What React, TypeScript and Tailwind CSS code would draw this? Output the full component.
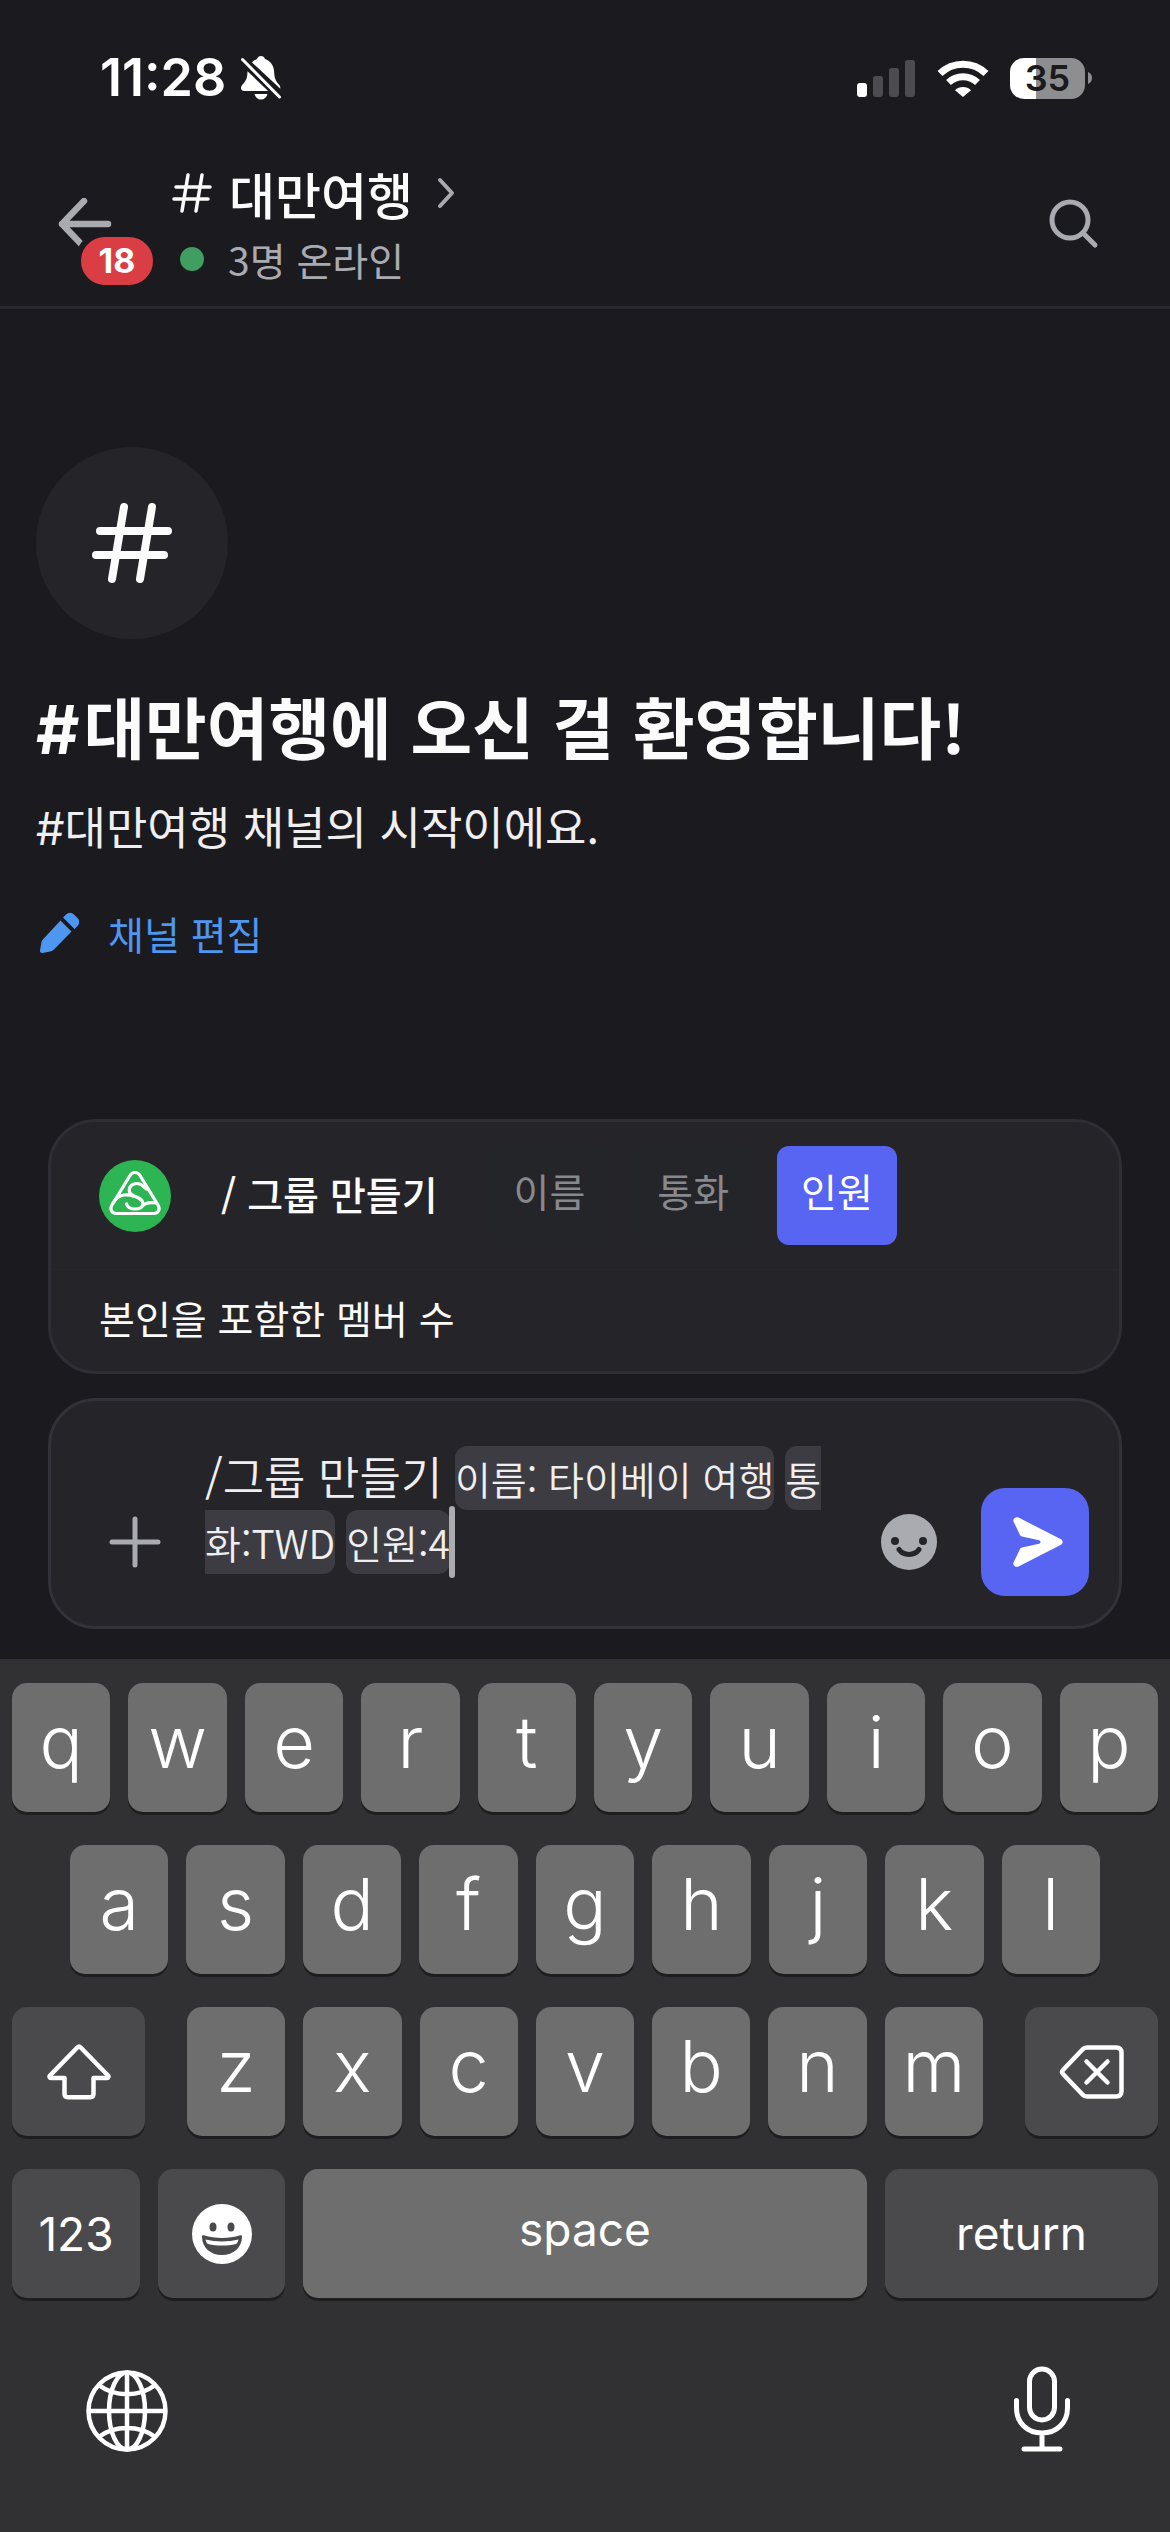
import type { ReactNode } from "react";

type Param = { name: string; active?: boolean };

const PARAMS: Param[] = [{ name: "이름" }, { name: "통화" }, { name: "인원", active: true }];

const ROW_1 = ["q", "w", "e", "r", "t", "y", "u", "i", "o", "p"];
const ROW_2 = ["a", "s", "d", "f", "g", "h", "j", "k", "l"];
const ROW_3 = ["z", "x", "c", "v", "b", "n", "m"];

function HashIcon({ className, stroke }: { className: string; stroke: number }) {
  return (
    <svg
      viewBox="0 0 80 80"
      className={className}
      fill="none"
      stroke="currentColor"
      strokeWidth={stroke}
      strokeLinecap="round"
      aria-hidden="true"
    >
      <path d="M32 4 20 76M60 4 48 76M8 28h68M4 52h68" />
    </svg>
  );
}

function StatusBar() {
  return (
    <div className="flex h-[141px] items-start justify-between pt-[48px] pr-[78px] pl-[100px] font-['Inter',sans-serif] text-white">
      <div className="flex items-center gap-[14px]">
        <span className="text-[52px] leading-[60px] font-semibold">11:28</span>
        <svg viewBox="0 0 42 44" className="h-[44px] w-[42px]" fill="currentColor" aria-hidden="true">
          <path d="M12 6.500C14 4.500 15.500 3.500 17 2.900 17.500 1 19.200 0 21 0s3.500 1 4 2.900c5 1.600 8.600 6 9 11.600.4 7.500 1.500 10 4.500 13.500 1.500 1.800 2 3 1.800 4.800L12 6.500Z" />
          <path d="M7.500 15.200 28.200 35H4.500C2.200 35 1 33.700 1 32c0-2 1.300-3 2.500-4.500 3-3.500 3.800-6 4-12.300ZM14.500 38h13c-.8 3.500-3.400 5.500-6.500 5.500s-5.700-2-6.500-5.500Z" />
          <path d="M2.500 3.500 39.500 41" stroke="currentColor" strokeWidth="3" strokeLinecap="round" />
        </svg>
      </div>
      <div className="flex h-[60px] items-center">
        <svg viewBox="0 0 58 37" className="mr-[22px] h-[37px] w-[58px]" fill="currentColor" aria-hidden="true">
          <rect x="0" y="23" width="10" height="14" rx="3" />
          <g opacity="0.22">
            <rect x="16" y="16" width="10" height="21" rx="3" />
            <rect x="32" y="8" width="10" height="29" rx="3" />
            <rect x="48" y="0" width="10" height="37" rx="3" />
          </g>
        </svg>
        <svg viewBox="0 0 52 37" className="mr-[21px] h-[37px] w-[52px]" fill="none" stroke="currentColor" aria-hidden="true">
          <path d="M3 13.500A33 33 0 0 1 49 13.500" strokeWidth="7" />
          <path d="M11.500 22.500A21 21 0 0 1 40.500 22.500" strokeWidth="7" />
          <path d="M18 30.200a11.500 11.500 0 0 1 16 0L26 37Z" fill="currentColor" stroke="none" />
        </svg>
        <div className="flex h-[41px] w-[75px] items-center justify-center rounded-[14px] bg-linear-to-r from-white from-35% to-[#8e8e90] to-35% text-[36px] leading-none font-semibold text-[#1b1a1f]">
          35
        </div>
        <svg viewBox="0 0 4 12" className="ml-[3px] h-[12px] w-[4px]" fill="#8e8e90" aria-hidden="true">
          <path d="M0 0c2.500 1 4 3.300 4 6s-1.500 5-4 6Z" />
        </svg>
      </div>
    </div>
  );
}

function ChannelHeader() {
  return (
    <header className="flex h-[168px] items-center border-b-3 border-[#29282e] pr-[71px] pl-[57px]">
      <button type="button" aria-label="뒤로" className="relative h-[52px] w-[56px] text-[#aaaab1]">
        <svg viewBox="0 0 56 52" className="h-full w-full" fill="none" stroke="currentColor" strokeWidth="6.500" strokeLinecap="round" strokeLinejoin="round" aria-hidden="true">
          <path d="M51 26H5M27 3 5 26l22 23" />
        </svg>
        <span className="absolute top-[33px] left-[18px] flex h-[60px] w-[84px] items-center justify-center rounded-full border-6 border-[#1b1a1f] bg-[#da3e44] font-['Inter',sans-serif] text-[34px] leading-none font-bold text-white">
          18
        </span>
      </button>
      <a href="#channel" className="ml-[59px] flex flex-col pb-[2px]">
        <span className="flex items-center">
          <HashIcon className="size-[40px] text-[#fbfbfb]" stroke={7} />
          <span className="ml-[17px] text-[50px] leading-[72px] font-medium text-[#fbfbfb]">대만여행</span>
          <svg viewBox="0 0 18 32" className="ml-[24px] h-[32px] w-[18px]" fill="none" stroke="#aaaab1" strokeWidth="4" strokeLinecap="round" strokeLinejoin="round" aria-hidden="true">
            <path d="M3 3 15 16 3 29" />
          </svg>
        </span>
        <span className="flex items-center">
          <span className="ml-[8px] size-[24px] rounded-full bg-[#409e60]" />
          <span className="ml-[24px] text-[39px] leading-[60px] text-[#aaaab1]">3명 온라인</span>
        </span>
      </a>
      <button type="button" aria-label="검색" className="ml-auto text-[#aaaab1]">
        <svg viewBox="0 0 50 50" className="size-[50px]" fill="none" stroke="currentColor" strokeWidth="5" strokeLinecap="round" aria-hidden="true">
          <circle cx="21" cy="21" r="18" />
          <path d="m35 35 11 11" />
        </svg>
      </button>
    </header>
  );
}

function Welcome() {
  return (
    <section className="flex flex-1 flex-col items-start px-9 pt-[138px]">
      <div className="flex size-[192px] items-center justify-center rounded-full bg-[#252429]">
        <HashIcon className="size-[80px] text-[#fbfbfb]" stroke={8} />
      </div>
      <h1 className="mt-[38px] text-[67px] leading-[96px] font-bold text-[#fbfbfb]">
        <span className="mr-1 font-['Inter',sans-serif]">#</span>대만여행에 오신 걸 환영합니다!
      </h1>
      <p className="mt-[15px] text-[45px] leading-[66px] text-[#efeff1]">
        <span className="font-['Inter',sans-serif]">#</span>대만여행 채널의 시작이에요.
      </p>
      <a href="#edit" className="mt-[41px] flex items-center gap-6 text-[39px] leading-[60px] text-[#4e96ef]">
        <svg viewBox="0 0 48 48" className="size-[48px]" fill="currentColor" aria-hidden="true">
          <path d="M29 6.500a5.500 5.500 0 0 1 8 0l3.500 3.500a5.500 5.500 0 0 1 0 8l-3 3L26 9.500Z" transform="translate(1 -1)" />
          <path d="m24.500 11.500 11 11L18 40.500c-1.200 1.200-2.300 1.700-4 2L6.500 44c-1.600.2-2.700-.8-2.500-2.500L5.300 34c.3-1.700.8-2.800 2-4Z" />
        </svg>
        채널 편집
      </a>
    </section>
  );
}

function BotLogo() {
  return (
    <svg viewBox="0 0 72 72" className="size-[72px]" fill="none" stroke="#fff" strokeWidth="3.200" strokeLinejoin="round" strokeLinecap="round" aria-hidden="true">
      <circle cx="36" cy="36" r="36" fill="#2db553" stroke="none" />
      <path d="M31 15.500c2.200-4 7.800-4 10 0L59 45c2.800 4.600 0 8.500-4.500 8.500h-37c-4.500 0-7.300-3.900-4.500-8.500Z" />
      <path d="M49 29c-3 2-4-5.500-11-5.500-5.500 0-8.500 4-7.500 8.500 1.500 5 13.500 5 13.500 11.500 0 4-4 5.500-8 5.500-4.500 0-7.500-2-8.500-5" />
      <path d="M14 43c3-5 6.500-7.500 11-8 4-.3 7 0 9 1M43 46.500c2.500-3 8-4.500 14-3.500" />
    </svg>
  );
}

function CommandCard() {
  return (
    <section className="rounded-[48px] border-3 border-[#2f2e34] bg-[#252429]">
      <div className="flex h-[147px] items-center px-12">
        <BotLogo />
        <h2 className="ml-[50px] pb-[5px] text-[39px] leading-[60px] font-medium text-[#fbfbfb]">/ 그룹 만들기</h2>
        <ul className="ml-[52px] flex gap-6">
          {PARAMS.map((p) => (
            <li
              key={p.name}
              className={
                p.active
                  ? "rounded-xl bg-[#5865f2] px-6 pt-[14px] pb-[25px] text-[39px] leading-[60px] text-white"
                  : "rounded-xl bg-[#242529] px-6 pt-[14px] pb-[25px] text-[39px] leading-[60px] text-[#88888d]"
              }
            >
              {p.name}
            </li>
          ))}
        </ul>
      </div>
      <p className="border-t border-[#28272c] px-12 pt-[17px] pb-[24px] text-[39px] leading-[60px] text-[#fbfbfb]">
        본인을 포함한 멤버 수
      </p>
    </section>
  );
}

function Composer() {
  return (
    <form className="flex items-end rounded-[48px] border-3 border-[#333238] bg-[#252429] pt-[43px] pr-[30px] pb-[30px] pl-[57px]">
      <button type="button" aria-label="첨부" className="mb-[27px] text-[#aaaab1]">
        <svg viewBox="0 0 54 54" className="size-[54px]" fill="none" stroke="currentColor" strokeWidth="5" strokeLinecap="round" aria-hidden="true">
          <path d="M27 4v46M4 27h46" />
        </svg>
      </button>
      <div
        role="textbox"
        aria-label="메시지"
        contentEditable
        suppressContentEditableWarning
        spellCheck={false}
        className="mr-[30px] mb-[22px] ml-[43px] flex-1 text-[39px] leading-[64px] font-[350] text-[#efeff1] outline-none"
      >
        <span className="text-[45px]">/그룹 만들기 </span>
        <span className="rounded-xl bg-[#3d3c42] py-[4px]">이름: 타이베이 여행</span>{" "}
        <span className="rounded-xl bg-[#3d3c42] py-[4px]">통화:TWD</span>{" "}
        <span className="relative rounded-xl bg-[#3d3c42] py-[4px]">
          인원:4
          <span className="absolute top-[-4px] right-[-5px] h-[72px] w-[6px] rounded-full bg-[#ababb0]" />
        </span>
      </div>
      <button type="button" aria-label="이모티콘" className="mb-[26px]">
        <svg viewBox="0 0 56 56" className="size-[56px]" aria-hidden="true">
          <circle cx="28" cy="28" r="28" fill="#aaaab1" />
          <circle cx="14" cy="27" r="4" fill="#252429" />
          <circle cx="42" cy="27" r="4" fill="#252429" />
          <path d="M18 35.500c4.500 6.500 15.500 6.500 20 0" fill="none" stroke="#252429" strokeWidth="5" strokeLinecap="round" />
        </svg>
      </button>
      <button
        type="submit"
        aria-label="보내기"
        className="ml-[44px] flex size-[108px] items-center justify-center rounded-3xl bg-[#5865f2] text-white"
      >
        <svg viewBox="0 0 52 52" className="ml-[6px] size-[52px]" fill="currentColor" aria-hidden="true">
          <path d="M6.500 1.500 49 23.300c2.200 1.200 2.200 4.200 0 5.400L6.500 50.500C3.800 51.800.4 49.500 1.500 46.500L8 33c.4-.9 1-1.300 2-1.500l17-3.700c2-.5 2-3.100 0-3.600l-17-3.700c-1-.2-1.600-.6-2-1.500L1.500 5.500C.4 2.500 3.800.2 6.500 1.500Z" />
        </svg>
      </button>
    </form>
  );
}

function LetterKey({ letter }: { letter: string }) {
  return (
    <button
      type="button"
      className="h-[129px] min-w-0 flex-1 rounded-[15px] bg-[#6e6e6f] pb-[12px] text-[72px] leading-none font-light text-white shadow-[0_3px_0_#1e1e1e]"
    >
      {letter}
    </button>
  );
}

function DarkKey({ label, className, children }: { label: string; className: string; children: ReactNode }) {
  return (
    <button
      type="button"
      aria-label={label}
      className={`flex h-[129px] items-center justify-center rounded-[15px] bg-[#4a4a4c] text-[46px] leading-none text-white shadow-[0_3px_0_#1e1e1e] ${className}`}
    >
      {children}
    </button>
  );
}

function Keyboard() {
  return (
    <section aria-label="키보드" className="bg-[#313133] px-3 pt-6 pb-[80px] font-['Inter',sans-serif]">
      <div className="flex flex-col gap-[33px]">
        <div className="flex gap-[18px]">
          {ROW_1.map((l) => (
            <LetterKey key={l} letter={l} />
          ))}
        </div>
        <div className="flex gap-[18px] px-[58px]">
          {ROW_2.map((l) => (
            <LetterKey key={l} letter={l} />
          ))}
        </div>
        <div className="flex">
          <DarkKey label="shift" className="w-[133px]">
            <svg viewBox="0 0 64 56" className="h-[56px] w-[64px]" fill="none" stroke="currentColor" strokeWidth="4.500" strokeLinejoin="round" aria-hidden="true">
              <path d="M30.300 3.500c1-1 2.400-1 3.400 0L61 31.500c1 1.200.4 2.500-1 2.500H46.500v16c0 2.200-1 3.200-3.200 3.200H20.700c-2.200 0-3.200-1-3.200-3.200V34H4c-1.400 0-2-1.300-1-2.500Z" />
            </svg>
          </DarkKey>
          <div className="mx-[42px] flex flex-1 gap-[18px]">
            {ROW_3.map((l) => (
              <LetterKey key={l} letter={l} />
            ))}
          </div>
          <DarkKey label="delete" className="w-[133px]">
            <svg viewBox="0 0 66 56" className="h-[56px] w-[66px]" fill="none" stroke="currentColor" strokeWidth="4.500" strokeLinecap="round" strokeLinejoin="round" aria-hidden="true">
              <path d="M28 3.500h29c3.500 0 5.500 2 5.500 5.500v38c0 3.500-2 5.500-5.500 5.500H28c-2 0-3.300-.6-4.500-2L4 30c-1.200-1.300-1.200-2.700 0-4L23.500 5.500c1.200-1.400 2.500-2 4.500-2Z" />
              <path d="m27.500 17.500 21 21M48.500 17.500l-21 21" />
            </svg>
          </DarkKey>
        </div>
        <div className="flex gap-[18px]">
          <DarkKey label="numbers" className="w-[128px]">
            123
          </DarkKey>
          <DarkKey label="emoji" className="w-[127px]">
            <svg viewBox="0 0 60 60" className="size-[60px]" aria-hidden="true">
              <circle cx="30" cy="30" r="30" fill="#fff" />
              <ellipse cx="21" cy="23" rx="3.500" ry="4.500" fill="#4a4a4c" />
              <ellipse cx="39" cy="23" rx="3.500" ry="4.500" fill="#4a4a4c" />
              <path d="M10 32.500c0-1 .8-1.500 1.800-1.200 11.500 3.500 25 3.500 36.400 0 1-.3 1.800.2 1.800 1.200C50 43.500 41.500 51 30 51S10 43.500 10 32.500Z" fill="#4a4a4c" />
              <path d="M13.500 35.500c10.500 2.500 22.500 2.500 33 0-.6 2.500-1.500 4-2.500 4.500-9 2-19 2-28 0-1-.5-2-2-2.500-4.500Z" fill="#fff" />
            </svg>
          </DarkKey>
          <button
            type="button"
            className="h-[129px] flex-1 rounded-[15px] bg-[#6e6e6f] pb-[10px] text-[46px] leading-none text-white shadow-[0_3px_0_#1e1e1e]"
          >
            space
          </button>
          <DarkKey label="return" className="w-[273px] pb-[2px]">
            return
          </DarkKey>
        </div>
      </div>
      <div className="mt-[68px] flex items-end justify-between pr-[87px] pl-[74px] text-white">
        <button type="button" aria-label="언어 전환">
          <svg viewBox="0 0 82 82" className="size-[82px]" fill="none" stroke="currentColor" strokeWidth="4.500" aria-hidden="true">
            <circle cx="41" cy="41" r="38.500" />
            <ellipse cx="41" cy="41" rx="18" ry="38.500" />
            <path d="M41 2.500v77M2.500 41h77M13.500 15.500c15 11.500 40 11.500 55 0M13.500 66.500c15-11.500 40-11.500 55 0" />
          </svg>
        </button>
        <button type="button" aria-label="음성 입력">
          <svg viewBox="0 0 58 86" className="h-[86px] w-[58px]" fill="none" stroke="currentColor" strokeWidth="5" strokeLinecap="round" aria-hidden="true">
            <rect x="16.500" y="3" width="25" height="51" rx="12.500" />
            <path d="M3.500 34.500V42c0 15 11 25 25.500 25s25.500-10 25.500-25v-7.500M29 67v15M11 83h36" />
          </svg>
        </button>
      </div>
    </section>
  );
}

export default function App() {
  return (
    <div lang="ko" className="flex min-h-screen flex-col bg-[#1b1a1f] font-['Noto_Sans_CJK_KR',sans-serif]">
      <StatusBar />
      <ChannelHeader />
      <main className="flex flex-1 flex-col">
        <Welcome />
        <div className="flex flex-col gap-6 px-12 pb-[30px]">
          <CommandCard />
          <Composer />
        </div>
      </main>
      <Keyboard />
    </div>
  );
}
